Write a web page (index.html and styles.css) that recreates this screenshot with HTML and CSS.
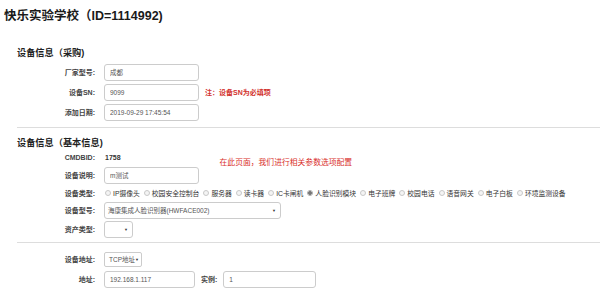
FILE: index.html
```html
<!DOCTYPE html>
<html lang="zh-CN">
<head>
<meta charset="utf-8">
<title>快乐实验学校</title>
<link rel="stylesheet" href="styles.css">
</head>
<body>
<div class="page">
  <h1 class="title">快乐实验学校（ID=1114992)</h1>

  <section class="sec sec-buy">
    <h2 class="sec-title">设备信息（采购)</h2>
    <div class="row">
      <label class="lbl">厂家型号:</label>
      <input class="ipt" type="text" value="成都">
    </div>
    <div class="row">
      <label class="lbl">设备SN:</label>
      <input class="ipt" type="text" value="9099">
      <span class="sn-note">注：设备SN为必填项</span>
    </div>
    <div class="row">
      <label class="lbl">添加日期:</label>
      <input class="ipt" type="text" value="2019-09-29 17:45:54">
    </div>
    <hr class="sep sep-1">
  </section>

  <section class="sec sec-base">
    <h2 class="sec-title">设备信息（基本信息)</h2>
    <div class="row row-id">
      <label class="lbl">CMDBID:</label>
      <span class="val">1758</span>
      <span class="tip">在此页面，我们进行相关参数选项配置</span>
    </div>
    <div class="row">
      <label class="lbl">设备说明:</label>
      <input class="ipt" type="text" value="m测试">
    </div>
    <div class="row row-radio">
      <label class="lbl">设备类型:</label>
      <div class="radios">
        <label class="rd"><input type="radio" name="t">IP摄像头</label>
        <label class="rd"><input type="radio" name="t">校园安全控制台</label>
        <label class="rd"><input type="radio" name="t">服务器</label>
        <label class="rd"><input type="radio" name="t">读卡器</label>
        <label class="rd"><input type="radio" name="t">IC卡闸机</label>
        <label class="rd"><input type="radio" name="t" checked>人脸识别模块</label>
        <label class="rd"><input type="radio" name="t">电子班牌</label>
        <label class="rd"><input type="radio" name="t">校园电话</label>
        <label class="rd"><input type="radio" name="t">语音网关</label>
        <label class="rd"><input type="radio" name="t">电子白板</label>
        <label class="rd"><input type="radio" name="t">环境监测设备</label>
      </div>
    </div>
    <div class="row row-model">
      <label class="lbl">设备型号:</label>
      <div class="sel sel-model"><span class="sel-text">海康集成人脸识别器(HWFACE002)</span><span class="arrow">▼</span></div>
    </div>
    <div class="row">
      <label class="lbl">资产类型:</label>
      <div class="sel sel-asset"><span class="sel-text"></span><span class="arrow">▼</span></div>
    </div>
    <hr class="sep sep-2">
    <div class="row row-addr">
      <label class="lbl">设备地址:</label>
      <div class="sel sel-tcp"><span class="sel-text">TCP地址</span><span class="arrow">▼</span></div>
    </div>
    <div class="row">
      <label class="lbl">地址:</label>
      <input class="ipt ipt-addr" type="text" value="192.168.1.117">
      <label class="lbl-inline">实例:</label>
      <input class="ipt ipt-inst" type="text" value="1">
    </div>
  </section>
</div>
</body>
</html>
```

FILE: styles.css
```css
* { box-sizing: border-box; }
html, body { margin: 0; padding: 0; background: #fff; }
body {
  font-family: "Liberation Sans", "Noto Sans CJK SC", sans-serif;
  color: #333;
  width: 600px;
  height: 291px;
  overflow: hidden;
}
.page { padding: 6px 0 0 4px; }
.title {
  margin: 0;
  font-size: 12.5px;
  line-height: 20px;
  font-weight: bold;
  color: #1a1a1a;
}
.sec { padding-left: 13px; }
.sec-title {
  margin: 0;
  font-size: 9.2px;
  line-height: 14px;
  font-weight: bold;
  color: #222;
}
.sec-buy .sec-title { margin-top: 20px; margin-bottom: 2px; }
.sec-base .sec-title { margin-top: 8px; }
.row {
  display: flex;
  align-items: center;
  height: 20px;
}
.lbl {
  width: 81px;
  padding-right: 3px;
  text-align: right;
  font-size: 7px;
  font-weight: bold;
  color: #444;
  flex: none;
}
.ipt {
  margin-left: 6px;
  width: 95px;
  height: 17px;
  border: 1px solid #ccc;
  border-radius: 3px;
  padding: 0 5px;
  font-family: "Liberation Sans", "Noto Sans CJK SC", sans-serif;
  font-size: 6.5px;
  color: #555;
  background: #fff;
  outline: none;
}
.sn-note {
  margin-left: 6px;
  font-size: 7px;
  font-weight: bold;
  color: #d2322d;
}
.sep {
  margin: 5px 0 0 0;
  border: 0;
  border-top: 1px solid #ddd;
  height: 0;
}
.sep-2 { margin-top: 3px; }
.row-id { height: 15px; align-items: center; }
.val {
  margin-left: 7px;
  font-size: 7px;
  font-weight: bold;
  color: #333;
}
.tip {
  margin-left: 99px;
  align-self: flex-start;
  margin-top: 6px;
  font-size: 7.8px;
  color: #d9302c;
  white-space: nowrap;
}
.row-radio { height: 16px; }
.radios {
  margin-left: 7px;
  display: flex;
  align-items: center;
  gap: 4px;
  white-space: nowrap;
}
.rd {
  display: flex;
  align-items: center;
  gap: 2px;
  font-size: 6.8px;
  color: #333;
}
.rd input {
  appearance: none;
  -webkit-appearance: none;
  margin: 0;
  width: 6px;
  height: 6px;
  border: 1px solid #c8c8c8;
  border-radius: 50%;
  background: #f4f4f4;
}
.rd input:checked {
  background: radial-gradient(circle, #777 0 1.6px, #eee 1.9px);
  border-color: #aaa;
}
.row-model { height: 18px; }
.sel {
  margin-left: 6px;
  height: 17px;
  border: 1px solid #ccc;
  border-radius: 3px;
  display: flex;
  align-items: center;
  justify-content: space-between;
  padding: 0 4px 0 3px;
  background: #fff;
}
.sel-text { font-size: 6.5px; color: #555; white-space: nowrap; }
.arrow { font-size: 4px; color: #333; }
.sel-model { width: 177px; }
.sel-asset { width: 29px; }
.sel-tcp { width: 38px; height: 15px; border-radius: 2px; padding: 0 3px 0 4px; }
.row-addr { margin-top: 6px; }
.ipt-addr { width: 91px; }
.lbl-inline {
  margin-left: 6px;
  font-size: 7px;
  font-weight: bold;
  color: #444;
}
.ipt-inst { width: 93px; margin-left: 6px; }
```
